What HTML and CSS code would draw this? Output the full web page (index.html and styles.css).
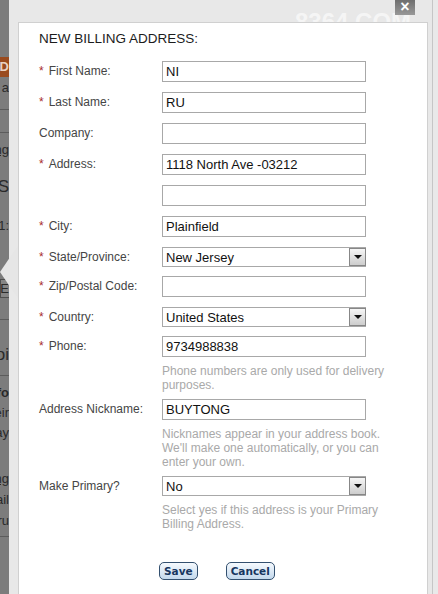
FILE: index.html
```html
<!DOCTYPE html>
<html lang="en">
<head>
  <meta charset="UTF-8" />
  <title>New Billing Address</title>
  <link rel="stylesheet" href="styles.css">
</head>
<body>

  <div class="screen">

    <!-- page behind the overlay, only a sliver shows -->
    <div class="page-edge">
      <div class="edge-tag">RD</div>
      <div class="edge-text e1">e a</div>
      <div class="edge-rule r1"></div>
      <div class="edge-rule r2"></div>
      <div class="edge-text e2 link">ng</div>
      <div class="edge-text e3 big">S</div>
      <div class="edge-text e4">1:</div>
      <div class="edge-box">E</div>
      <div class="edge-rule r3"></div>
      <div class="edge-text e5 big">oi</div>
      <div class="edge-rule r4"></div>
      <div class="edge-text e6 bold">fo</div>
      <div class="edge-text e7">eir</div>
      <div class="edge-text e7">ay</div>
      <div class="edge-text e8 link">ng</div>
      <div class="edge-text e9">ail</div>
      <div class="edge-text e9">ru</div>
      <div class="edge-rule r5"></div>
    </div>

    <!-- Dialog -->
    <div class="dialog">
      <span class="watermark">8364.COM</span>
      <span class="close">&times;</span>
      <div class="pointer"></div>

      <div class="panel">
        <h2 class="title">NEW BILLING ADDRESS:</h2>

        <form class="address-form">
          <div class="row">
            <label class="label"><span class="req">*</span>First Name:</label>
            <div class="control"><input class="field" type="text" value="NI"></div>
          </div>

          <div class="row">
            <label class="label"><span class="req">*</span>Last Name:</label>
            <div class="control"><input class="field" type="text" value="RU"></div>
          </div>

          <div class="row">
            <label class="label">Company:</label>
            <div class="control"><input class="field" type="text" value=""></div>
          </div>

          <div class="row">
            <label class="label"><span class="req">*</span>Address:</label>
            <div class="control"><input class="field" type="text" value="1118 North Ave -03212"></div>
          </div>

          <div class="row">
            <label class="label"></label>
            <div class="control"><input class="field" type="text" value=""></div>
          </div>

          <div class="row">
            <label class="label"><span class="req">*</span>City:</label>
            <div class="control"><input class="field" type="text" value="Plainfield"></div>
          </div>

          <div class="row row-select">
            <label class="label"><span class="req">*</span>State/Province:</label>
            <div class="control">
              <div class="select"><span class="select-value">New Jersey</span><span class="select-arrow"></span></div>
            </div>
          </div>

          <div class="row">
            <label class="label"><span class="req">*</span>Zip/Postal Code:</label>
            <div class="control"><input class="field" type="text" value=""></div>
          </div>

          <div class="row row-select">
            <label class="label"><span class="req">*</span>Country:</label>
            <div class="control">
              <div class="select"><span class="select-value">United States</span><span class="select-arrow"></span></div>
            </div>
          </div>

          <div class="row row-hint">
            <label class="label"><span class="req">*</span>Phone:</label>
            <div class="control">
              <input class="field" type="text" value="9734988838">
              <p class="hint">Phone numbers are only used for delivery purposes.</p>
            </div>
          </div>

          <div class="row row-hint">
            <label class="label">Address Nickname:</label>
            <div class="control">
              <input class="field" type="text" value="BUYTONG">
              <p class="hint">Nicknames appear in your address book. We'll make one automatically, or you can enter your own.</p>
            </div>
          </div>

          <div class="row row-hint">
            <label class="label">Make Primary?</label>
            <div class="control">
              <div class="select"><span class="select-value">No</span><span class="select-arrow"></span></div>
              <p class="hint">Select yes if this address is your Primary Billing Address.</p>
            </div>
          </div>

          <div class="actions">
            <button type="button" class="btn">Save</button>
            <button type="button" class="btn">Cancel</button>
          </div>
        </form>
      </div>
    </div>

    <div class="page-edge-right"></div>
  </div>

</body>
</html>
```

FILE: styles.css
```css
body {
  margin: 0;
  padding: 0;
  background: #7c7c7c;
  font-family: 'Liberation Sans', Arial, sans-serif;
  overflow: hidden;
}

.screen {
  display: flex;
  height: 594px;
}

/* page behind */
.page-edge {
  width: 9px;
  display: flex;
  flex-direction: column;
  background: #7c7c7c;
  overflow: hidden;
}

.edge-text {
  display: flex;
  justify-content: flex-end;
  overflow: hidden;
  white-space: nowrap;
  color: #2a2a2a;
  font-size: 13px;
  line-height: 15px;
  height: 15px;
}

.edge-text.big { font-size: 17px; line-height: 18px; height: 18px; }
.edge-text.bold { font-weight: bold; }
.edge-text.link { text-decoration: underline; }

.edge-tag {
  display: flex;
  justify-content: flex-end;
  overflow: hidden;
  margin-top: 57px;
  height: 20px;
  background: #9a4b1f;
  color: #e9d2c2;
  font-weight: bold;
  font-size: 13px;
  line-height: 20px;
}

.edge-box {
  display: flex;
  justify-content: flex-end;
  overflow: hidden;
  margin-top: 46px;
  height: 17px;
  border: 1px solid #4e4e4e;
  border-right: none;
  background: #858585;
  color: #2a2a2a;
  font-size: 13px;
  line-height: 17px;
}

.edge-rule { height: 1px; background: #5c5c5c; }
.e1 { margin-top: 3px; }
.r1 { margin-top: 14px; }
.r2 { margin-top: 22px; }
.e2 { margin-top: 9px; }
.e3 { margin-top: 21px; }
.e4 { margin-top: 22px; }
.r3 { margin-top: 21px; }
.e5 { margin-top: 26px; }
.r4 { margin-top: 11px; }
.e6 { margin-top: 9px; }
.e7 { margin-top: 5px; }
.e8 { margin-top: 31px; }
.e9 { margin-top: 6px; }
.r5 { margin-top: 8px; }

.page-edge-right {
  width: 5px;
  background: #e9e9e9;
}

/* dialog frame */
.dialog {
  flex: 1;
  position: relative;
  display: flex;
  flex-direction: column;
  background: #e8e8e8;
  border-right: 1px solid #c6c6c6;
  padding: 22px 4px 0 9px;
}

.watermark {
  position: absolute;
  top: 10px;
  left: 286px;
  font-size: 24px;
  line-height: 24px;
  font-weight: bold;
  color: rgba(255, 255, 255, 0.6);
}

.close {
  position: absolute;
  top: 0;
  right: 17px;
  z-index: 2;
  width: 20px;
  height: 15px;
  background: linear-gradient(#6e6e6e, #989898);
  color: white;
  font-size: 16px;
  font-weight: bold;
  line-height: 14px;
  text-align: center;
}

.pointer {
  position: absolute;
  top: 244px;
  left: -9px;
  width: 19px;
  height: 56px;
  background: #e6e6e6;
  clip-path: polygon(0 50%, 100% 0, 100% 100%);
}

.panel {
  flex: 1;
  position: relative;
  z-index: 1;
  background: white;
  border: 1px solid #d0d0d0;
  border-bottom: none;
  padding: 8px 0 0 20px;
}

.title {
  margin: 0 0 14px;
  font-size: 13.5px;
  line-height: 16px;
  font-weight: normal;
  color: #1c1c1c;
}

/* form rows */
.row {
  display: flex;
  align-items: flex-start;
  margin-bottom: 10px;
}

.row-select { margin-bottom: 9px; }
.row-hint { margin-bottom: 7px; }

.label {
  width: 123px;
  padding-top: 3px;
  font-size: 12px;
  line-height: 15px;
  color: #454545;
}

.req {
  color: #a82c2c;
  margin-right: 5px;
}

.control {
  width: 240px;
}

.field {
  display: block;
  box-sizing: border-box;
  width: 204px;
  height: 21px;
  margin: 0;
  padding: 0 3px;
  border: 1px solid #a8a8a8;
  border-radius: 0;
  font-family: 'Liberation Sans', Arial, sans-serif;
  font-size: 13px;
  color: #111;
  outline: none;
}

.select {
  display: flex;
  align-items: center;
  box-sizing: border-box;
  width: 204px;
  height: 20px;
  border: 1px solid #a8a8a8;
  font-size: 13px;
  color: #111;
}

.select-value {
  flex: 1;
  padding-left: 3px;
}

.select-arrow {
  display: flex;
  justify-content: center;
  align-items: center;
  box-sizing: border-box;
  width: 17px;
  height: 18px;
  margin-right: -1px;
  border: 1px solid #878787;
  background: linear-gradient(#f6f6f6, #cdcdcd);
}

.select-arrow::after {
  content: "";
  border-left: 4px solid transparent;
  border-right: 4px solid transparent;
  border-top: 4px solid #111;
}

.hint {
  margin: 7px 0 0;
  font-size: 12px;
  line-height: 14px;
  color: #a9a9a9;
}

/* buttons */
.actions {
  display: flex;
  gap: 28px;
  margin-top: 31px;
  padding-left: 120px;
}

.btn {
  height: 18px;
  padding: 0 4px;
  border: 1px solid #33506f;
  border-radius: 5px;
  background: linear-gradient(#f6fafe, #c3d8ec);
  color: #17365f;
  font-family: 'DejaVu Sans', Verdana, sans-serif;
  font-size: 10.5px;
  font-weight: bold;
  line-height: 16px;
  cursor: pointer;
}
```
